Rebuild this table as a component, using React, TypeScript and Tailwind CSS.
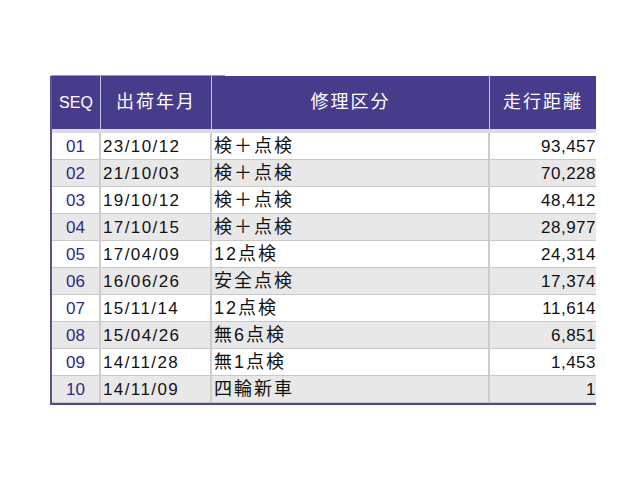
import React from "react";

const rows = [
  ["01", "23/10/12", "検＋点検", "93,457"],
  ["02", "21/10/03", "検＋点検", "70,228"],
  ["03", "19/10/12", "検＋点検", "48,412"],
  ["04", "17/10/15", "検＋点検", "28,977"],
  ["05", "17/04/09", "12点検", "24,314"],
  ["06", "16/06/26", "安全点検", "17,374"],
  ["07", "15/11/14", "12点検", "11,614"],
  ["08", "15/04/26", "無6点検", "6,851"],
  ["09", "14/11/28", "無1点検", "1,453"],
  ["10", "14/11/09", "四輪新車", "1"],
];

const font = {
  fontFamily: '"Liberation Sans", "Noto Sans CJK JP", sans-serif',
};

export default function App() {
  return (
    <div className="w-[640px] h-[480px] bg-white overflow-hidden" style={font}>
      <div className="pt-[75px] pl-[50px]">
        <div className="w-[174px] h-px bg-[#9a9a9a] ml-px" />
        <div className="w-[546px] border-l-2 border-[#5a5296]">
          <div className="grid grid-cols-[49px_111px_278px_106px] h-[57px] bg-[#473c8b] text-white border-b-4 border-[#dcdae8]">
            <div className="flex items-center justify-center text-[16px] border-r border-[#c9c4ea]">SEQ</div>
            <div className="flex items-center justify-center text-[18px] tracking-[2px] border-r border-[#c9c4ea]">出荷年月</div>
            <div className="flex items-center justify-center text-[18px] tracking-[2px] border-r border-[#c9c4ea]">修理区分</div>
            <div className="flex items-center justify-center text-[18px] tracking-[2px]">走行距離</div>
          </div>
          {rows.map((r, i) => (
            <div
              key={r[0]}
              className={`grid grid-cols-[49px_111px_278px_106px] h-[27px] border-b border-[#c8c8c8] ${
                i % 2 === 1 ? "bg-[#e8e8e8]" : "bg-white"
              }`}
            >
              <div className="flex items-center justify-center text-[17px] text-[#2c2c84] border-r-2 border-[#cdcdcd]">{r[0]}</div>
              <div className="flex items-center pl-[2px] text-[17px] tracking-[1.4px] text-[#111] border-r-2 border-[#cdcdcd]">{r[1]}</div>
              <div className="flex items-center pl-[2px] text-[18px] tracking-[2px] text-[#111] border-r-2 border-[#cdcdcd]">{r[2]}</div>
              <div className="flex items-center justify-end text-[17px] tracking-[0.5px] text-[#111]">{r[3]}</div>
            </div>
          ))}
          <div className="h-[2px] bg-[#4e468e]" />
        </div>
      </div>
    </div>
  );
}
